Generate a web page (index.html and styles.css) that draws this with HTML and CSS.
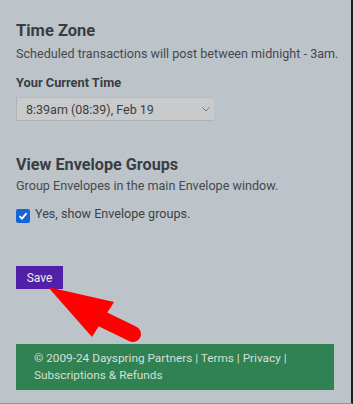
FILE: index.html
```html
<!DOCTYPE html>
<html lang="en">
<head>
  <meta charset="UTF-8">
  <meta name="viewport" content="width=device-width, initial-scale=1.0">
  <title>Settings</title>
  <link rel="stylesheet" href="styles.css">
</head>
<body>

  <div class="page">
    <div class="section">
      <h2>Time Zone</h2>
      <p class="note">Scheduled transactions will post between midnight - 3am.</p>
      <div class="label">Your Current Time</div>
      <div class="select">
        <span>8:39am (08:39), Feb 19</span>
        <svg class="chev" width="8" height="5" viewBox="0 0 8 5"><path d="M0.5 0.5 L4 4 L7.5 0.5" fill="none" stroke="#777" stroke-width="1"/></svg>
      </div>
    </div>

    <div class="section groups">
      <h2>View Envelope Groups</h2>
      <p class="note">Group Envelopes in the main Envelope window.</p>
      <label class="check">
        <span class="box">
          <svg width="10" height="10" viewBox="0 0 10 10"><path d="M1.5 5.2 L4 7.6 L8.6 2.2" fill="none" stroke="#fff" stroke-width="1.8"/></svg>
        </span>
        Yes, show Envelope groups.
      </label>
    </div>

    <div class="save">Save</div>

    <footer class="footer">
      &copy; 2009-24 Dayspring Partners | Terms | Privacy | Subscriptions &amp; Refunds
    </footer>

    <!-- annotation arrow -->
    <svg class="arrow" width="353" height="404" viewBox="0 0 353 404">
      <polygon points="48,287 114,302 92,337" fill="#ff0000"/>
      <line x1="98" y1="317" x2="133" y2="334" stroke="#ff0000" stroke-width="16" stroke-linecap="round"/>
    </svg>
  </div>

</body>
</html>
```

FILE: styles.css
```css
html, body {
  margin: 0;
  height: 100%;
}

body {
  font-family: Roboto, "Liberation Sans", sans-serif;
  background-color: #bcc4ca;
  color: #3b3f43;
  overflow: hidden;
}

.page {
  position: relative;
  width: 351px;
  height: 403px;
  border-right: 2px solid #1c1f22;
  border-bottom: 1px solid #8c9398;
  box-sizing: content-box;
  padding: 0;
}

.section {
  padding: 0 16px;
}

h2 {
  margin: 0;
  padding-top: 20px;
  font-size: 16.5px;
  font-weight: 700;
  color: #3a3d41;
  line-height: 22px;
}

.note {
  margin: 4px 0 0;
  font-size: 12.6px;
  line-height: 16px;
  color: #45494d;
  white-space: nowrap;
}

.label {
  margin-top: 13px;
  font-size: 12.8px;
  font-weight: 700;
  color: #3a3d41;
  line-height: 16px;
}

.select {
  margin-top: 6px;
  width: 198px;
  height: 24px;
  background-color: #c9cacb;
  border: 1px solid #aeb3b6;
  border-right: none;
  border-top-color: #b9bdbf;
  display: flex;
  align-items: center;
  justify-content: space-between;
  padding: 0 4px 0 9px;
  box-sizing: border-box;
  font-size: 12.5px;
  color: #3b3f43;
}

.chev {
  margin-top: 1px;
}

.groups h2 {
  padding-top: 33px;
  font-size: 16.2px;
}

.groups .note {
  margin-top: 2px;
}

.check {
  display: flex;
  align-items: flex-start;
  gap: 5px;
  margin-top: 12px;
  font-size: 12.6px;
  line-height: 16px;
  color: #3e4246;
}

.box {
  width: 14px;
  height: 14px;
  margin-top: 3px;
  background-color: #1565d8;
  border-radius: 2px;
  display: flex;
  align-items: center;
  justify-content: center;
}

.save {
  margin: 43px 0 0 16px;
  width: 47px;
  height: 23px;
  background-color: #5220a8;
  color: #eee;
  font-size: 12px;
  display: flex;
  align-items: center;
  justify-content: center;
}

.footer {
  margin: 55px 0 0 16px;
  width: 318px;
  box-sizing: border-box;
  background-color: #318253;
  color: #d6dfd8;
  font-size: 11.8px;
  line-height: 16.5px;
  padding: 6px 18px 7px;
}

.arrow {
  position: absolute;
  left: 0;
  top: 0;
  pointer-events: none;
}
```
